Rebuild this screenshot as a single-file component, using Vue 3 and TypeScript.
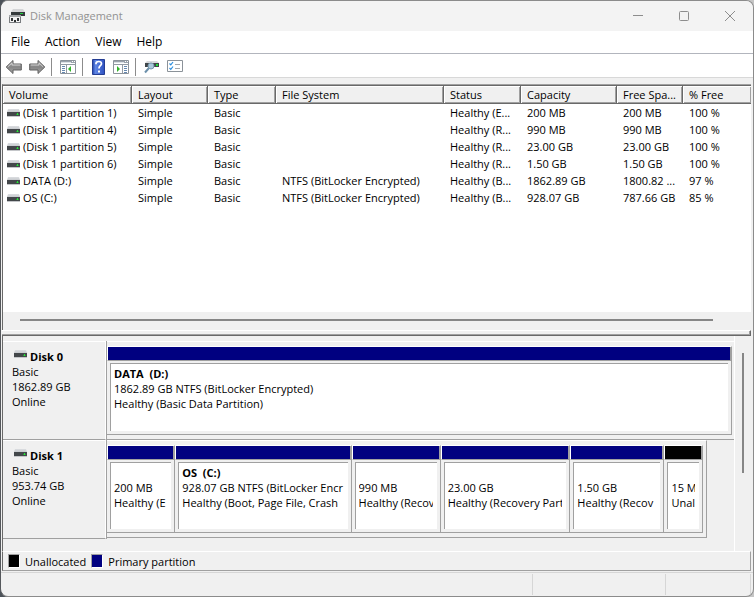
<script setup lang="ts">
interface Volume {
  name: string
  fileSystem: string
  status: string
  capacity: string
  free: string
  percent: string
}

interface Partition {
  title: string
  size: string
  status: string
  span: number
  unallocated?: boolean
}

interface Disk {
  name: string
  size: string
  width: number
  partitions: Partition[]
}

const menus = ['File', 'Action', 'View', 'Help']

const columns = ['Volume', 'Layout', 'Type', 'File System', 'Status', 'Capacity', 'Free Spa...', '% Free']

const volumes: Volume[] = [
  { name: '(Disk 1 partition 1)', fileSystem: '', status: 'Healthy (E...', capacity: '200 MB', free: '200 MB', percent: '100 %' },
  { name: '(Disk 1 partition 4)', fileSystem: '', status: 'Healthy (R...', capacity: '990 MB', free: '990 MB', percent: '100 %' },
  { name: '(Disk 1 partition 5)', fileSystem: '', status: 'Healthy (R...', capacity: '23.00 GB', free: '23.00 GB', percent: '100 %' },
  { name: '(Disk 1 partition 6)', fileSystem: '', status: 'Healthy (R...', capacity: '1.50 GB', free: '1.50 GB', percent: '100 %' },
  { name: 'DATA (D:)', fileSystem: 'NTFS (BitLocker Encrypted)', status: 'Healthy (B...', capacity: '1862.89 GB', free: '1800.82 ...', percent: '97 %' },
  { name: 'OS (C:)', fileSystem: 'NTFS (BitLocker Encrypted)', status: 'Healthy (B...', capacity: '928.07 GB', free: '787.66 GB', percent: '85 %' },
]

const disks: Disk[] = [
  {
    name: 'Disk 0',
    size: '1862.89 GB',
    width: 100,
    partitions: [
      { title: 'DATA  (D:)', size: '1862.89 GB NTFS (BitLocker Encrypted)', status: 'Healthy (Basic Data Partition)', span: 1 },
    ],
  },
  {
    name: 'Disk 1',
    size: '953.74 GB',
    width: 95.7,
    partitions: [
      { title: '', size: '200 MB', status: 'Healthy (E', span: 68 },
      { title: 'OS  (C:)', size: '928.07 GB NTFS (BitLocker Encr', status: 'Healthy (Boot, Page File, Crash', span: 177 },
      { title: '', size: '990 MB', status: 'Healthy (Recov', span: 89 },
      { title: '', size: '23.00 GB', status: 'Healthy (Recovery Part', span: 130 },
      { title: '', size: '1.50 GB', status: 'Healthy (Recov', span: 94 },
      { title: '', size: '15 MB', status: 'Unal', span: 38, unallocated: true },
    ],
  },
]
</script>

<template>
  <div class="window">
    <svg class="defs" width="0" height="0" aria-hidden="true">
      <defs>
        <linearGradient id="arrowFill" x1="0" y1="0" x2="0" y2="1">
          <stop offset="0" stop-color="#b8b8b8" />
          <stop offset="0.5" stop-color="#858585" />
          <stop offset="1" stop-color="#a8a8a8" />
        </linearGradient>
        <linearGradient id="helpFill" x1="0" y1="0" x2="1" y2="0">
          <stop offset="0" stop-color="#2446ae" />
          <stop offset="0.25" stop-color="#5f86e4" />
          <stop offset="1" stop-color="#2d50c0" />
        </linearGradient>
        <linearGradient id="driveTop" x1="0" y1="0" x2="0" y2="1">
          <stop offset="0" stop-color="#dcdee1" />
          <stop offset="1" stop-color="#c6c9cd" />
        </linearGradient>
        <symbol id="drive" viewBox="0 0 13 8">
          <path d="M1 0h11l1 3H0z" fill="url(#driveTop)" />
          <path d="M0 3h13v4H0z" fill="#43474a" />
          <path d="M0 7h13v1H0z" fill="#c4c6c9" />
          <path d="M10 4h1v2h-1z" fill="#28e038" />
          <path d="M9 5h1v1H9zM11 5h1v1h-1z" fill="#2a9a36" />
        </symbol>
      </defs>
    </svg>

    <header class="titlebar">
      <svg class="app-icon" width="18" height="16" viewBox="0 0 18 16" aria-hidden="true">
        <path d="M5 1h10l2 3H3z" fill="#d4d5d7" />
        <path d="M3 4h14v4H3z" fill="#353a3c" />
        <path d="M12 5h3v1h-3z" fill="#22cf3f" />
        <path d="M1 7h12v8H1z" fill="#7a7d80" />
        <path d="M2 9h10v5H2z" fill="#f4f4f4" />
        <path d="M3 10h2v3H3zM9 10h2v3H9zM6 12h2v2H6z" fill="#303335" />
        <path d="M1 7h12v2H1z" fill="#a2a5a7" />
      </svg>
      <h1>Disk Management</h1>
      <div class="window-buttons">
        <button type="button" aria-label="Minimize">
          <svg width="12" height="12" viewBox="0 0 12 12"><path d="M1 5.5h10" /></svg>
        </button>
        <button type="button" aria-label="Maximize">
          <svg width="12" height="12" viewBox="0 0 12 12"><rect x="1.5" y="1.5" width="9" height="9" rx="1" /></svg>
        </button>
        <button type="button" aria-label="Close">
          <svg width="12" height="12" viewBox="0 0 12 12"><path d="M1 1l10 10M11 1L1 11" /></svg>
        </button>
      </div>
    </header>

    <nav class="menubar">
      <button v-for="menu in menus" :key="menu" type="button">{{ menu }}</button>
    </nav>

    <div class="toolbar" role="toolbar" aria-label="Tools">
      <div class="tool-group">
        <button type="button" aria-label="Back">
          <svg width="18" height="16" viewBox="0 0 18 16">
            <path d="M1.2 8l6.8-6.5V5h8.3v6H8v3.5z" fill="url(#arrowFill)" stroke="#5f5f5f" />
            <path d="M2.7 8L7 3.9V6h8.3" fill="none" stroke="#cfcfcf" />
          </svg>
        </button>
        <button type="button" aria-label="Forward">
          <svg width="18" height="16" viewBox="0 0 18 16">
            <path d="M16.8 8L10 1.5V5H1.7v6H10v3.5z" fill="url(#arrowFill)" stroke="#5f5f5f" />
            <path d="M2.7 6H11V3.9L15.3 8" fill="none" stroke="#cfcfcf" />
          </svg>
        </button>
      </div>
      <div class="tool-group">
        <button type="button" aria-label="Show or hide console tree">
          <svg width="16" height="16" viewBox="0 0 16 16">
            <path d="M.5 1.5h15v13H.5z" fill="#fff" stroke="#8c939b" />
            <path d="M1 2h14v2H1z" fill="#9ba3ad" />
            <path d="M1 3h10v1H1z" fill="#dce0e5" />
            <path d="M12 2h1v1h-1zM14 2h1v1h-1z" fill="#fff" />
            <path d="M0 5.5h16M6.5 6v8.5" fill="none" stroke="#929aa3" />
            <path d="M2 7.5h3M2 9.5h3M2 11.5h3M2 13.5h3" stroke="#6688b0" />
            <path d="M11 7v6l-3-3z" fill="#31b329" />
          </svg>
        </button>
      </div>
      <div class="tool-group">
        <button type="button" aria-label="Help">
          <svg width="15" height="16" viewBox="-1 0 15 16">
            <path d="M.5.5h12v15H.5z" fill="url(#helpFill)" stroke="#243d93" />
            <path d="M4 5.2V4.6C4 3.2 5.2 2.5 6.7 2.5c1.7 0 2.8.9 2.8 2.2C9.5 6.5 7 6.8 7 9v.5" fill="none" stroke="#fff" stroke-width="1.7" />
            <path d="M6 11.5h2v2H6z" fill="#fff" />
          </svg>
        </button>
        <button type="button" aria-label="Show or hide action pane">
          <svg width="16" height="16" viewBox="0 0 16 16">
            <path d="M.5 1.5h15v13H.5z" fill="#fff" stroke="#8c939b" />
            <path d="M1 2h14v2H1z" fill="#9ba3ad" />
            <path d="M1 3h10v1H1z" fill="#dce0e5" />
            <path d="M12 2h1v1h-1zM14 2h1v1h-1z" fill="#fff" />
            <path d="M0 5.5h16M9.5 6v8.5" fill="none" stroke="#929aa3" />
            <path d="M11 7.5h3M11 9.5h3M11 11.5h3M11 13.5h3" stroke="#6688b0" />
            <path d="M4 7v6l3-3z" fill="#31b329" />
          </svg>
        </button>
      </div>
      <div class="tool-group">
        <button type="button" aria-label="Rescan disks">
          <svg width="16" height="16" viewBox="0 0 16 16">
            <path d="M3 2h10l2 2H1z" fill="#d8dadd" />
            <path d="M1 4h14v4H1z" fill="#404649" />
            <path d="M12 5h2v2h-2z" fill="#20dd38" />
            <path d="M5 9l-4 4.5" stroke="#6c90ab" stroke-width="2" />
            <circle cx="7" cy="7" r="3" fill="#a9c8dc" stroke="#7797ad" />
          </svg>
        </button>
        <button type="button" aria-label="Customize view">
          <svg width="16" height="16" viewBox="0 0 16 16">
            <path d="M.5 1.5h15v11H.5z" fill="#fff" stroke="#8b9299" />
            <path d="M2.5 4.5l1.3 1.3L6 3M2.5 9l1.3 1.3L6 7.5" fill="none" stroke="#2b8fe0" stroke-width="1.2" />
            <path d="M8 5.5h5M8 9.5h5" stroke="#a3a8ad" />
          </svg>
        </button>
      </div>
    </div>

    <main class="console">
      <section class="volume-pane">
        <table>
          <colgroup>
            <col v-for="(column, i) in columns" :key="column" :class="`col-${i}`" />
          </colgroup>
          <thead>
            <tr>
              <th v-for="column in columns" :key="column" scope="col">{{ column }}</th>
            </tr>
          </thead>
          <tbody>
            <tr v-for="volume in volumes" :key="volume.name">
              <td>
                <span class="volume-name">
                  <svg width="13" height="8" aria-hidden="true"><use href="#drive" /></svg>
                  {{ volume.name }}
                </span>
              </td>
              <td>Simple</td>
              <td>Basic</td>
              <td>{{ volume.fileSystem }}</td>
              <td>{{ volume.status }}</td>
              <td>{{ volume.capacity }}</td>
              <td>{{ volume.free }}</td>
              <td>{{ volume.percent }}</td>
            </tr>
          </tbody>
        </table>
        <div class="h-scroll"><div class="h-thumb"></div></div>
      </section>

      <div class="splitter"></div>

      <section class="disk-pane">
        <div class="disks">
          <article v-for="disk in disks" :key="disk.name" class="disk">
            <div class="disk-label">
              <h2>
                <svg width="13" height="8" aria-hidden="true"><use href="#drive" /></svg>
                {{ disk.name }}
              </h2>
              <p>Basic</p>
              <p>{{ disk.size }}</p>
              <p>Online</p>
            </div>
            <div class="track">
              <div class="strip" :class="{ partial: disk.width < 100 }" :style="{ width: disk.width + '%' }">
                <div
                  v-for="(part, i) in disk.partitions"
                  :key="i"
                  class="partition"
                  :style="{ flexGrow: part.span }"
                >
                  <div class="band" :class="{ unallocated: part.unallocated }"></div>
                  <div class="well">
                    <div class="details">
                      <h3>{{ part.title }}</h3>
                      <p>{{ part.size }}</p>
                      <p>{{ part.status }}</p>
                    </div>
                  </div>
                </div>
              </div>
            </div>
          </article>
        </div>
        <div class="v-scroll"><div class="v-thumb"></div></div>
      </section>

      <div class="legend">
        <span class="swatch unallocated"></span>
        <span>Unallocated</span>
        <span class="swatch"></span>
        <span>Primary partition</span>
      </div>
    </main>

    <footer class="statusbar">
      <span></span>
      <span></span>
      <span></span>
    </footer>
  </div>
</template>

<style>
body {
  margin: 0;
  background: linear-gradient(90deg, #4c5259 50%, #c6c6c6 50%);
}
</style>

<style scoped>
.window {
  box-sizing: border-box;
  display: flex;
  flex-direction: column;
  height: 100vh;
  overflow: hidden;
  border: 1px solid #8b8b8b;
  border-left-color: #55585c;
  border-radius: 8px;
  background: #f0f0f0;
  color: #000;
  font: 11px/15px "Open Sans", "Noto Sans", sans-serif;
}

.defs {
  position: absolute;
}

h1,
h2,
h3,
p {
  margin: 0;
  font-size: inherit;
}

button {
  padding: 0;
  border: 0;
  background: none;
  color: inherit;
  font: inherit;
}

svg {
  display: block;
  flex: none;
}

.titlebar {
  display: flex;
  flex: none;
  align-items: center;
  height: 30px;
  padding-left: 7px;
  gap: 4px;
  background: #f3f3f3;
}

.titlebar h1 {
  flex: 1;
  padding-bottom: 2px;
  color: #929292;
  font-weight: 400;
}

.window-buttons {
  display: flex;
}

.window-buttons button {
  display: flex;
  align-items: center;
  justify-content: center;
  width: 46px;
  height: 30px;
}

.window-buttons svg {
  fill: none;
  stroke: #8d8d8d;
}

.menubar {
  display: flex;
  flex: none;
  gap: 15px;
  height: 20px;
  padding: 0 0 2px 10px;
  border-bottom: 1px solid #b2b5bd;
  background: #fff;
  font-size: 12px;
}

.toolbar {
  display: flex;
  flex: none;
  align-items: center;
  height: 21px;
  padding: 2px 0 0 4px;
  border-bottom: 1px solid #d8d8d8;
  background: #fff;
}

.tool-group {
  display: flex;
  align-items: center;
  gap: 7px;
  height: 18px;
  padding-right: 6px;
}

.tool-group + .tool-group {
  padding-left: 8px;
  border-left: 1px solid #8c8c8c;
}

.tool-group:first-child {
  gap: 5px;
  padding-right: 5px;
}

.console {
  display: flex;
  flex: 1;
  flex-direction: column;
  min-height: 0;
  margin: 6px 2px 0 1px;
}

.volume-pane {
  display: flex;
  flex: 1;
  flex-direction: column;
  min-height: 0;
  border-top: 1px solid #a0a0a0;
  border-left: 1px solid #696969;
  background: #fff;
}

table {
  width: 100%;
  table-layout: fixed;
  border-collapse: separate;
  border-spacing: 0;
}

th,
td {
  overflow: hidden;
  padding: 0 6px;
  font-weight: 400;
  text-align: left;
  white-space: nowrap;
}

th {
  height: 17px;
  border: solid;
  border-width: 1px 1px 1px 0;
  border-color: #696969;
  background: #f0f0f0;
  box-shadow: inset 1px 1px #fff, inset -1px -1px #a0a0a0;
}

td {
  height: 17px;
}

th:last-child {
  border-right: 0;
}

td:first-child {
  padding-left: 4px;
}

.volume-name {
  display: flex;
  align-items: center;
  gap: 3px;
}

.col-0 {
  width: 129px;
}

.col-1 {
  width: 76px;
}

.col-2 {
  width: 68px;
}

.col-3 {
  width: 168px;
}

.col-4 {
  width: 77px;
}

.col-5 {
  width: 96px;
}

.col-6 {
  width: 66px;
}

.h-scroll {
  height: 18px;
  margin-top: auto;
  padding: 0 38px 0 17px;
  background: #f0f0f0;
}

.h-thumb {
  height: 2px;
  margin-top: 7px;
  background: #868686;
}

.splitter {
  height: 4px;
  border: solid;
  border-width: 1px 1px 1px 0;
  border-color: #fff #696969 #696969;
  box-shadow: inset -1px -1px #a0a0a0;
}

.disk-pane {
  display: flex;
  flex: none;
  height: 215px;
  border-left: 1px solid #696969;
}

.disks {
  flex: 1;
  min-width: 0;
  padding-top: 5px;
}

.disk {
  display: grid;
  grid-template-columns: 103px 1fr;
  height: 99px;
}

.disk-label {
  padding: 7px 9px 0;
  border: solid;
  border-width: 1px 1px 1px 0;
  border-color: #fff #fff #a0a0a0;
}

.disk-label h2 {
  display: flex;
  gap: 3px;
  padding-left: 2px;
  font-weight: 700;
}

.disk-label svg {
  margin-top: 1px;
}

.track {
  min-width: 0;
  border-bottom: 1px solid #a0a0a0;
  border-left: 1px solid #a0a0a0;
}

.disk:last-child .track {
  border-bottom: 0;
}

.strip {
  box-sizing: border-box;
  display: flex;
  height: 98px;
  padding: 4px 2px 4px 0;
  border-top: 1px solid #fff;
}

.strip.partial {
  padding-right: 3px;
  border-right: 1px solid #a0a0a0;
  border-bottom: 1px solid #a0a0a0;
}

.partition {
  display: flex;
  flex: 1 1 0;
  flex-direction: column;
  min-width: 0;
  border: solid;
  border-width: 1px 1px 1px 0;
  border-color: #fff #a0a0a0 #a0a0a0;
}

.band {
  height: 13px;
  border-right: 1px solid #a0a0a0;
  border-bottom: 1px solid #a0a0a0;
  border-left: 1px solid #fff;
  background: #000080;
}

.band.unallocated {
  background: #000;
}

.well {
  flex: 1;
  margin: 2px 3px 3px;
  padding: 2px 4px 0 3px;
  border-top: 1px solid #a0a0a0;
  border-left: 1px solid #a0a0a0;
  background: #fff;
}

.details {
  overflow: hidden;
  white-space: pre;
}

.details h3 {
  height: 15px;
}

.v-scroll {
  width: 16px;
  border-left: 1px solid #fff;
}

.v-thumb {
  width: 2px;
  height: 120px;
  margin: 17px 0 0 7px;
  background: #868686;
}

.legend {
  display: flex;
  flex: none;
  align-items: center;
  gap: 5px;
  height: 18px;
  padding-left: 5px;
  border: solid;
  border-width: 1px;
  border-color: #fff #a0a0a0 #a0a0a0 #696969;
}

.swatch {
  box-sizing: border-box;
  width: 12px;
  height: 14px;
  border: 1px solid;
  border-color: #a0a0a0 #fff #fff #a0a0a0;
  background: #000080;
}

.swatch.unallocated {
  background: #000;
}

.statusbar {
  display: grid;
  flex: none;
  grid-template-columns: 1fr 133px 85px;
  height: 23px;
  margin-top: 1px;
  padding-right: 2px;
  border-top: 1px solid #d6d6d6;
}

.statusbar span {
  margin: 1px 0;
  border-right: 1px solid #d6d6d6;
}
</style>
